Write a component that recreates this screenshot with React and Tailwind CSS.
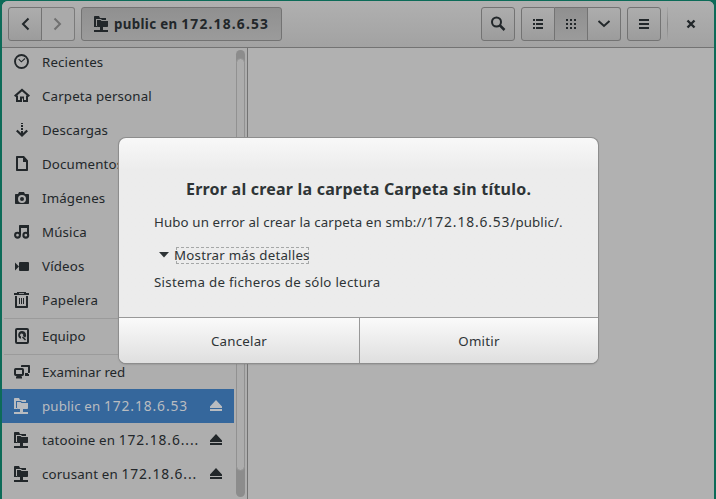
import React from 'react';

function Icon({ children, className = '' }) {
  return (
    <svg width="16" height="16" viewBox="0 0 16 16" fill="currentColor" className={`block shrink-0 ${className}`}>
      {children}
    </svg>
  );
}

const Clock = () => (
  <Icon>
    <circle cx="7.5" cy="7.5" r="6.500" fill="none" stroke="currentColor" strokeWidth="1.9" />
    <path d="M4.7 5.2 7.3 7.8 11 4.5" fill="none" stroke="currentColor" strokeWidth="1.1" />
  </Icon>
);
const Home = () => (
  <Icon>
    <path d="M.7 8.200 8 1.900l7.300 6.300" fill="none" stroke="currentColor" strokeWidth="2.100" />
    <path d="M2 7.500h2V12h2V8.500h4V12h2V7.500h2V14H9V10.500H8V14H2z" />
  </Icon>
);
const Download = () => (
  <Icon>
    <path d="M7 1h2v1H7zM7 3h2v2H7zM7 6h2v2H7zM7 9h2v4H7z" />
    <path d="M2.800 8.500 8 13.500l5.200-5" fill="none" stroke="currentColor" strokeWidth="2.300" />
  </Icon>
);
const Doc = () => (
  <Icon>
    <path fillRule="evenodd" d="M3 0h7l4 4.500V14c0 .6-.4 1-1 1H3c-.6 0-1-.4-1-1V1c0-.6.4-1 1-1zM4 2v11h8V6H9V2z" />
  </Icon>
);
const Camera = () => (
  <Icon>
    <path fillRule="evenodd" d="M5 2h5l1 2h3c.6 0 1 .4 1 1v8c0 .6-.4 1-1 1H2c-.6 0-1-.4-1-1V5c0-.6.4-1 1-1h2zM8 5a4 4 0 1 0 0 8 4 4 0 0 0 0-8zm0 2a2 2 0 1 1 0 4 2 2 0 0 1 0-4z" />
  </Icon>
);
const Music = () => (
  <Icon>
    <path d="M5 2c0-.6.4-1 1-1h9v10h-2V4H7v7H5z" />
    <circle cx="3.500" cy="11.200" r="2.400" fill="none" stroke="currentColor" strokeWidth="2.100" />
    <circle cx="11.800" cy="11.200" r="2.400" fill="none" stroke="currentColor" strokeWidth="2.100" />
  </Icon>
);
const Video = () => (
  <Icon>
    <rect x="5" y="4" width="10" height="9" rx="1" />
    <path d="M1 4.500 5 8.500l-4 4z" />
  </Icon>
);
const Trash = () => (
  <Icon>
    <path fillRule="evenodd" d="M3 0h9v1h3v2H0V1h3zM5 1v.8h5V1z" />
    <path fillRule="evenodd" d="M1 4h2v10h9V4h2v11c0 .6-.4 1-1 1H2c-.6 0-1-.4-1-1z" />
    <path d="M5 6h1v6H5zM7 6h1v6H7zM9 6h1v6H9z" />
  </Icon>
);
const Disk = () => (
  <Icon>
    <rect x="2" y="1" width="12" height="14" rx="1" fill="none" stroke="currentColor" strokeWidth="2" />
    <path d="M8 3a4 4 0 0 1 3 6.700L9 8a1.600 1.600 0 1 0-2 .600V10.800A4 4 0 0 1 8 3z" />
    <path d="m8.500 9 3 3" stroke="currentColor" strokeWidth="1.400" />
  </Icon>
);
const Network = () => (
  <Icon>
    <path d="M7 3V2c0-.6.4-1 1-1h7c.6 0 1 .4 1 1v6c0 .6-.4 1-1 1h-1v1h1v2h-4V9h3V3z" />
    <rect x="1" y="5" width="8" height="6" rx=".7" fill="none" stroke="currentColor" strokeWidth="2" />
    <path d="M3 11.500h4l1 1.500v1.500H2V13z" />
  </Icon>
);
const Server = () => (
  <Icon>
    <path d="M1 0h4l1 2h6v2H8L7 3H2v7h1v1H0V1c0-.6.4-1 1-1z" />
    <path d="M3 4h3.500l1 1H14v5c0 .6-.4 1-1 1H9v3H6v-3H4c-.6 0-1-.4-1-1z" />
    <path d="M0 14h14v2H0z" />
  </Icon>
);
const Eject = () => (
  <svg width="12" height="12" viewBox="0 0 12 12" fill="currentColor" className="block shrink-0">
    <path d="M6 0l6 6.500V8H0V6.500zM0 9h12v2H0z" />
  </svg>
);

const places = [
  [Clock, 'Recientes'],
  [Home, 'Carpeta personal'],
  [Download, 'Descargas'],
  [Doc, 'Documentos'],
  [Camera, 'Imágenes'],
  [Music, 'Música'],
  [Video, 'Vídeos'],
  [Trash, 'Papelera'],
];
const shares = [
  ['public en ', '172.18.6.53', true],
  ['tatooine en ', '172.18.6....', false],
  ['corusant en ', '172.18.6...', false],
];

function Row({ icon: I, label, address, selected, eject, tracking = 'tracking-[0.15px]' }) {
  return (
    <div className={`flex h-[34px] w-[232px] shrink-0 items-center px-3 ${selected ? 'bg-[#35679c] text-[#b9bcc0]' : ''}`}>
      <I />
      <span className={`ml-3 flex-1 whitespace-pre pt-px ${tracking}`}>
        {label}
        {address && <span className="text-[13.8px] leading-none tracking-[0.9px]">{address}</span>}
      </span>
      {eject && <Eject />}
    </div>
  );
}

const btn = 'flex items-center justify-center border border-[#737373] bg-linear-to-b from-[#adadad] to-[#9c9c9c]';

export default function App() {
  return (
    <div className="relative h-[499px] w-[716px] overflow-hidden bg-[#0c6b58] pl-[2px] pr-[2px] pt-px font-['Noto_Sans',sans-serif] text-[13.3px] text-[#22272a]">
      <div className="flex h-[498px] flex-col overflow-hidden rounded-t-[6px] bg-[#b1b1b1]">
        <header className="flex h-[47px] shrink-0 items-start border-b border-[#737373] bg-linear-to-b from-[#b0b0b0] to-[#a2a2a2] pl-[6px] pt-[6px]">
          <div className="flex">
            <div className={`${btn} h-[34px] w-[34px] rounded-l-[3px]`}>
              <Icon><path d="M11.500 2.500 6 8l5.500 5.500" fill="none" stroke="currentColor" strokeWidth="2" /></Icon>
            </div>
            <div className="flex h-[34px] w-[33px] items-center justify-center rounded-r-[3px] border border-l-0 border-[#7b7b7b] bg-[#aaaaaa] text-[#707070]">
              <Icon><path d="M4.500 2.500 10 8l-5.500 5.500" fill="none" stroke="currentColor" strokeWidth="2" /></Icon>
            </div>
          </div>
          <div className="ml-[6px] flex h-[34px] w-[201px] items-center rounded-[3px] border border-[#737373] bg-linear-to-b from-[#909090] to-[#9b9b9b] pl-3">
            <Server />
            <span className="ml-[4px] whitespace-nowrap pt-px font-bold tracking-[0.35px]">
              public en <span className="text-[13.8px] leading-none tracking-[1.200px]">172.18.6.53</span>
            </span>
          </div>
          <div className={`${btn} ml-[199px] h-[34px] w-[34px] rounded-[3px]`}>
            <Icon>
              <circle cx="6.500" cy="6" r="4.500" fill="none" stroke="currentColor" strokeWidth="2" />
              <path d="m9.500 9 5 5" stroke="currentColor" strokeWidth="2.500" />
            </Icon>
          </div>
          <div className="ml-[6px] flex">
            <div className={`${btn} h-[34px] w-[34px] rounded-l-[3px]`}>
              <Icon><path d="M3 3h2v2H3zM6 3h7v2H6zM3 7h2v2H3zM6 7h7v2H6zM3 11h2v2H3zM6 11h7v2H6z" /></Icon>
            </div>
            <div className="flex h-[34px] w-[33px] items-center justify-center border-y border-r border-[#737373] bg-linear-to-b from-[#909090] to-[#9b9b9b]">
              <Icon><path d="M3 3h2v2H3zM7 3h2v2H7zM11 3h2v2h-2zM3 7h2v2H3zM7 7h2v2H7zM11 7h2v2h-2zM3 11h2v2H3zM7 11h2v2H7zM11 11h2v2h-2z" /></Icon>
            </div>
            <div className={`${btn} h-[34px] w-[33px] rounded-r-[3px] border-l-0`}>
              <Icon><path d="m2.500 5 5.500 5 5.500-5" fill="none" stroke="currentColor" strokeWidth="2" /></Icon>
            </div>
          </div>
          <div className={`${btn} ml-[6px] h-[34px] w-[34px] rounded-[3px]`}>
            <Icon><path d="M3 3h10v2H3zM3 7h10v2H3zM3 11h10v2H3z" /></Icon>
          </div>
          <div className="ml-[6px] h-[34px] w-px bg-linear-to-b from-[#a8a8a8] via-[#858585] to-[#a4a4a4]" />
          <div className="ml-[15px] flex h-[34px] items-center">
            <Icon><path d="m4.500 4.500 7 7m0-7-7 7" stroke="currentColor" strokeWidth="2.400" /></Icon>
          </div>
        </header>
        <div className="flex min-h-0 flex-1">
          <aside className="flex w-[246px] shrink-0 overflow-hidden border-r border-[#737373] bg-[#aeaeae]">
            <div className="-mt-[3px] flex w-[234px] flex-col">
              {places.map(([I, label]) => <Row key={label} icon={I} label={label} />)}
              <div className="ml-[2px] mt-px h-px shrink-0 bg-[#9b9b9b]" />
              <Row icon={Disk} label="Equipo" tracking="tracking-[0px]" />
              <div className="ml-[2px] mt-px h-px shrink-0 bg-[#9b9b9b]" />
              <Row icon={Network} label="Examinar red" tracking="tracking-[0px]" />
              {shares.map(([label, address, selected]) => (
                <Row key={label} icon={Server} label={label} address={address} selected={selected} eject />
              ))}
            </div>
            <div className="mt-[2px] h-[447px] w-[9px] overflow-hidden rounded-full bg-[#8c8c8c] pt-2">
              <div className="h-[413px] rounded-full border border-[#919191] bg-[#adadad]" />
            </div>
          </aside>
          <main className="flex-1 bg-[#b1b1b1]" />
        </div>
      </div>

      <div className="absolute left-[119px] top-[138px] flex h-[225px] w-[479px] flex-col overflow-hidden rounded-[7px] bg-[#ececec] bg-linear-to-b from-[#f8f8f8] to-[#ececec] to-[32px] text-[#2e3436] shadow-[0_0_0_1px_#8d8d8d,0_1px_2px_#777]">
        <div className="flex-1 pl-[35px] pt-[39px]">
          <h1 className="ml-[32px] whitespace-nowrap text-[16px] font-bold leading-6 tracking-[0.22px]">Error al crear la carpeta Carpeta sin título.</h1>
          <p className="mt-[11px] whitespace-nowrap leading-5 tracking-[0.12px]">
            Hubo un error al crear la carpeta en smb://<span className="text-[13.8px] leading-none tracking-[0.87px]">172.18.6.53</span>/public/.
          </p>
          <div className="mt-[13px] flex h-5 items-center pl-[5px]">
            <svg width="10" height="6" viewBox="0 0 10 6" className="block"><path d="M0 0h10L5 5.500z" fill="#2e3436" /></svg>
            <div className="ml-[7px] h-[17px] w-[133px] border border-dashed border-[#a5a7a7]">
              <span className="-ml-[3px] -mt-px block whitespace-nowrap leading-[17px] tracking-[0.22px]">Mostrar más detalles</span>
            </div>
          </div>
          <p className="mt-[7px] whitespace-nowrap leading-5 tracking-[0.28px]">Sistema de ficheros de sólo lectura</p>
        </div>
        <div className="flex h-[46px] border-t border-[#989898] tracking-[0.22px]">
          <div className="flex w-[241px] items-center justify-center border-r border-[#989898] bg-linear-to-b from-[#fafafa] to-[#dfdfdf] pt-[3px]">Cancelar</div>
          <div className="flex flex-1 items-center justify-center bg-linear-to-b from-[#fafafa] to-[#dfdfdf] pt-[3px]">Omitir</div>
        </div>
      </div>
    </div>
  );
}
